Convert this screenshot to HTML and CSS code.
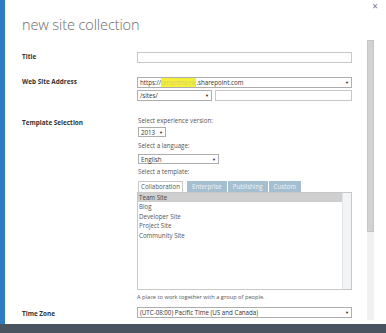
FILE: index.html
```html
<!DOCTYPE html>
<html>
<head>
<meta charset="utf-8">
<link rel="stylesheet" href="styles.css">
</head>
<body>
<div class="page">
  <div class="dialog">
    <div class="strip"></div>
    <div class="inner">
      <div class="header">
        <div class="title">new site collection</div>
        <div class="close">×</div>
      </div>
      <div class="body">
        <div class="form">
          <div class="row row-title">
            <div class="label">Title</div>
            <div class="field"><div class="input full"></div></div>
          </div>
          <div class="row row-address">
            <div class="label">Web Site Address</div>
            <div class="field">
              <div class="select full"><span>https://<span class="mark">tenantname</span>.sharepoint.com</span><span class="arrow">▼</span></div>
              <div class="pair">
                <div class="select sites"><span>/sites/</span><span class="arrow">▼</span></div>
                <div class="input rest"></div>
              </div>
            </div>
          </div>
          <div class="row row-template">
            <div class="label">Template Selection</div>
            <div class="field">
              <div class="hint">Select experience version:</div>
              <div class="select ver"><span>2013</span><span class="arrow">▼</span></div>
              <div class="hint hint-lang">Select a language:</div>
              <div class="select lang"><span>English</span><span class="arrow">▼</span></div>
              <div class="hint hint-tpl">Select a template:</div>
              <div class="tabs">
                <div class="tab active">Collaboration</div>
                <div class="tab">Enterprise</div>
                <div class="tab">Publishing</div>
                <div class="tab">Custom</div>
              </div>
              <div class="listbox">
                <div class="items">
                  <div class="item selected">Team Site</div>
                  <div class="item">Blog</div>
                  <div class="item">Developer Site</div>
                  <div class="item">Project Site</div>
                  <div class="item">Community Site</div>
                </div>
                <div class="lscroll"></div>
              </div>
              <div class="desc">A place to work together with a group of people.</div>
            </div>
          </div>
          <div class="row row-tz">
            <div class="label">Time Zone</div>
            <div class="field">
              <div class="select full"><span>(UTC-08:00) Pacific Time (US and Canada)</span><span class="arrow">▼</span></div>
            </div>
          </div>
        </div>
        <div class="vscroll"><div class="thumb"></div></div>
      </div>
    </div>
  </div>
  <div class="bottombar"></div>
</div>
</body>
</html>
```
FILE: styles.css
```css
html, body {
  margin: 0;
  padding: 0;
  background: #ffffff;
}
body {
  font-family: "Open Sans", "Noto Sans", sans-serif;
  color: #444;
}
.page {
  width: 386px;
  height: 333px;
  display: flex;
  flex-direction: column;
  overflow: hidden;
}
.dialog {
  flex: 1;
  display: flex;
  min-height: 0;
}
.strip {
  width: 5px;
  background: #2b7cc3;
}
.inner {
  flex: 1;
  display: flex;
  flex-direction: column;
}
.header {
  height: 40px;
  display: flex;
  justify-content: space-between;
  align-items: flex-start;
}
.title {
  margin: 15px 0 0 17px;
  font-size: 14.5px;
  font-weight: 300;
  color: #6a6a6a;
  letter-spacing: -0.1px;
}
.close {
  margin: 0 7px 0 0;
  font-size: 10px;
  color: #777;
  line-height: 12px;
  padding: 0 1px;
}
.body {
  flex: 1;
  display: flex;
}
.form {
  width: 362px;
  padding-left: 17px;
  box-sizing: border-box;
}
.vscroll {
  width: 7px;
  height: 280px;
  background: #f1f1f1;
  display: flex;
  flex-direction: column;
}
.thumb {
  height: 192px;
  background: #d2d2d2;
  border: 1px solid #c4c4c4;
  box-sizing: border-box;
}
.row {
  display: flex;
}
.label {
  width: 115px;
  font-size: 6.4px;
  font-weight: 700;
  color: #333;
  flex: none;
  line-height: 9px;
}
.field {
  width: 215px;
}
.row-title { margin-top: 12px; }
.row-address { margin-top: 14px; }
.row-template { margin-top: 16px; }
.row-template .label { padding-top: 1px; }
.row-tz { margin-top: 6px; }
.row-tz .label { padding-top: 2px; }

.input, .select {
  height: 11px;
  box-sizing: border-box;
  border: 1px solid #c8c8c8;
  background: #fff;
}
.select {
  border-color: #adadad;
  display: flex;
  justify-content: space-between;
  align-items: center;
  font-size: 6.2px;
  color: #333;
  padding: 0 2px 0 2px;
  line-height: 9px;
  white-space: nowrap;
}
.arrow {
  font-size: 4px;
  color: #222;
}
.mark {
  background: #f4f03a;
  color: #d8d060;
}
.full { width: 215px; }
.pair {
  display: flex;
  gap: 3px;
  margin-top: 2px;
}
.sites { width: 75px; }
.rest { width: 137px; border-color: #c8c8c8; }
.hint {
  font-size: 6.2px;
  color: #555;
  line-height: 8px;
  margin-left: 1px;
}
.ver { width: 28px; margin: 2px 0 0 1px; height: 10px; }
.hint-lang { margin-top: 5px; }
.lang { width: 81px; margin: 4px 0 0 1px; height: 10px; }
.hint-tpl { margin-top: 4px; }
.tabs {
  display: flex;
  gap: 1px;
  margin: 5px 0 0 1px;
  height: 11px;
}
.tab {
  font-size: 6.2px;
  line-height: 11px;
  padding: 0 5px;
  background: #a6bfd0;
  color: #eef3f7;
}
.tab.active {
  background: #fff;
  color: #555;
  border: 1px solid #c8c8c8;
  border-bottom: none;
  line-height: 10px;
  padding: 0 2px;
  margin-right: 3px;
}
.listbox {
  width: 215px;
  height: 98px;
  border: 1px solid #c8c8c8;
  box-sizing: border-box;
  display: flex;
}
.items {
  flex: 1;
}
.item {
  font-size: 6.2px;
  line-height: 9.5px;
  color: #555;
  padding-left: 1px;
}
.item.selected {
  background: #cfcfcf;
  color: #444;
  line-height: 9px;
}
.lscroll {
  width: 8px;
  background: #f3f4f6;
  border-left: 1px solid #e2e4e8;
}
.desc {
  font-size: 5.7px;
  color: #555;
  line-height: 8px;
  margin-top: 3px;
}
.bottombar {
  height: 9px;
  background: #4a5460;
}
```
